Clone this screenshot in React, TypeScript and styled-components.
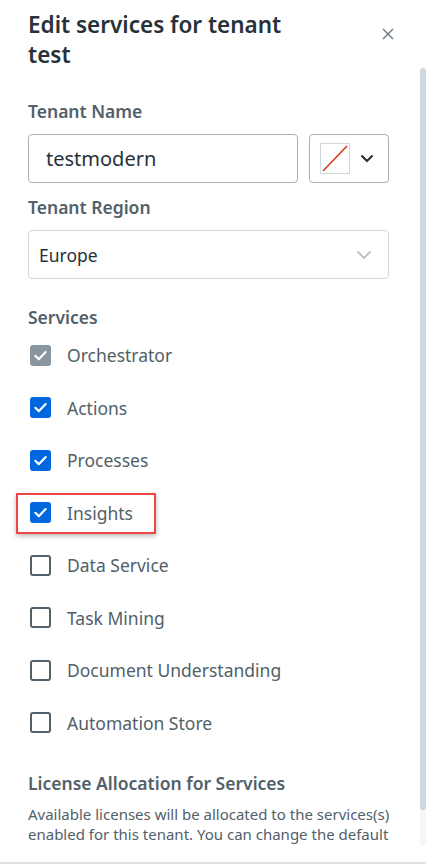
import styled, { createGlobalStyle } from "styled-components";

const GlobalStyle = createGlobalStyle`
  html, body {
    margin: 0;
    padding: 0;
    background: #ffffff;
  }
  body {
    font-family: "Noto Sans", "Open Sans", sans-serif;
  }
  * {
    box-sizing: border-box;
  }
`;

const services = [
  { name: "Orchestrator", state: "disabled" },
  { name: "Actions", state: "checked" },
  { name: "Processes", state: "checked" },
  { name: "Insights", state: "checked", highlight: true },
  { name: "Data Service", state: "empty" },
  { name: "Task Mining", state: "empty" },
  { name: "Document Understanding", state: "empty" },
  { name: "Automation Store", state: "empty" },
];

type BoxState = "disabled" | "checked" | "empty";

const CheckMark = () => (
  <svg width="15" height="15" viewBox="0 0 14 14" fill="none">
    <path d="M2.2 7.3 L5.4 10.4 L11.8 3.8" stroke="#ffffff" strokeWidth="2" strokeLinecap="round" strokeLinejoin="round" />
  </svg>
);

const App = () => {
  return (
    <>
      <GlobalStyle />
      <Panel>
        <Header>
          <Title>Edit services for tenant test</Title>
          <CloseButton aria-label="close">
            <svg width="12" height="12" viewBox="0 0 12 12">
              <path d="M1 1 L11 11 M11 1 L1 11" stroke="#6b7780" strokeWidth="1.4" />
            </svg>
          </CloseButton>
        </Header>
        <BodyWrap>
          <Body>
            <Label>Tenant Name</Label>
            <NameRow>
              <TextInput>testmodern</TextInput>
              <ColorPicker>
                <Swatch>
                  <svg width="28" height="29" viewBox="0 0 28 29">
                    <line x1="2" y1="27" x2="26" y2="2" stroke="#d43a14" strokeWidth="1.6" />
                  </svg>
                </Swatch>
                <svg width="14" height="9" viewBox="0 0 14 9">
                  <path d="M1.5 1.5 L7 7 L12.5 1.5" stroke="#273139" strokeWidth="2.2" fill="none" />
                </svg>
              </ColorPicker>
            </NameRow>
            <Label>Tenant Region</Label>
            <Select>
              <span>Europe</span>
              <svg width="16" height="10" viewBox="0 0 16 10">
                <path d="M1.5 1.5 L8 8 L14.5 1.5" stroke="#b8c0c6" strokeWidth="1.8" fill="none" />
              </svg>
            </Select>
            <SectionLabel>Services</SectionLabel>
            <List>
              {services.map((s) => (
                <Row key={s.name}>
                  <Box $state={s.state as BoxState}>{s.state !== "empty" && <CheckMark />}</Box>
                  <RowText>{s.name}</RowText>
                  {s.highlight && <Highlight />}
                </Row>
              ))}
            </List>
            <LicenseTitle>License Allocation for Services</LicenseTitle>
            <Paragraph>
              Available licenses will be allocated to the services(s) enabled for this tenant. You can change the default
              configuration from the edit license allocation page.
            </Paragraph>
          </Body>
          <ScrollTrack>
            <ScrollThumb />
          </ScrollTrack>
        </BodyWrap>
        <Footer />
      </Panel>
    </>
  );
};

export default App;

const Panel = styled.div`
  width: 426px;
  height: 864px;
  display: flex;
  flex-direction: column;
  background: #ffffff;
  overflow: hidden;
`;

const Header = styled.div`
  height: 68px;
  flex: none;
  display: flex;
  align-items: flex-start;
  justify-content: space-between;
  padding: 10px 32px 0 28px;
`;

const Title = styled.h2`
  margin: 0;
  width: 280px;
  font-size: 22.5px;
  line-height: 30px;
  font-weight: 600;
  color: #273139;
`;

const CloseButton = styled.button`
  margin-top: 18px;
  padding: 0;
  border: none;
  background: none;
  width: 12px;
  height: 12px;
  display: flex;
`;

const BodyWrap = styled.div`
  height: 778px;
  flex: none;
  display: flex;
`;

const Body = styled.div`
  flex: 1;
  overflow: hidden;
  padding: 31px 31px 0 28px;
`;

const ScrollTrack = styled.div`
  width: 6px;
  height: 100%;
  background: #f4f6f8;
  border-radius: 3px;
`;

const ScrollThumb = styled.div`
  height: 742px;
  background: #cfd8dd;
  border-radius: 3px;
`;

const Label = styled.div`
  font-size: 17.5px;
  line-height: 24px;
  font-weight: 600;
  color: #526069;
  margin-bottom: 11px;
`;

const SectionLabel = styled(Label)`
  margin-top: 26px;
  margin-bottom: 0;
`;

const NameRow = styled.div`
  display: flex;
  gap: 11px;
  margin-bottom: 12px;
`;

const TextInput = styled.div`
  flex: 1;
  height: 49px;
  border: 1px solid #a4b1b8;
  border-radius: 4px;
  padding: 0 17px;
  display: flex;
  align-items: center;
  font-size: 20px;
  color: #273139;
`;

const ColorPicker = styled.div`
  width: 80px;
  height: 49px;
  border: 1px solid #a4b1b8;
  border-radius: 4px;
  display: flex;
  align-items: center;
  gap: 10px;
  padding-left: 10px;
`;

const Swatch = styled.div`
  width: 30px;
  height: 31px;
  border: 1px solid #cfd8dd;
  display: flex;
  align-items: center;
  justify-content: center;
`;

const Select = styled.div`
  height: 49px;
  border: 1px solid #cfd8dd;
  border-radius: 4px;
  padding: 0 16px 0 10px;
  display: flex;
  align-items: center;
  justify-content: space-between;
  font-size: 17.5px;
  color: #273139;
`;

const List = styled.div`
  display: grid;
  grid-auto-rows: 52.5px;
  margin-bottom: 22px;
`;

const Row = styled.div`
  position: relative;
  display: flex;
  align-items: center;
  gap: 16px;
  padding-left: 2px;
`;

const Box = styled.div<{ $state: BoxState }>`
  width: 21px;
  height: 21px;
  border-radius: 3px;
  display: flex;
  align-items: center;
  justify-content: center;
  background: ${(p) => (p.$state === "checked" ? "#0067df" : p.$state === "disabled" ? "#8a969f" : "#ffffff")};
  border: ${(p) => (p.$state === "empty" ? "2.5px solid #526069" : "none")};
`;

const RowText = styled.span`
  font-size: 17.5px;
  color: #526069;
`;

const Highlight = styled.div`
  position: absolute;
  left: -12px;
  top: 6px;
  width: 140px;
  height: 41px;
  border: 2.5px solid #ec4646;
  box-shadow: 0 2px 5px rgba(0, 0, 0, 0.28);
  pointer-events: none;
`;

const LicenseTitle = styled(Label)`
  margin-bottom: 9px;
`;

const Paragraph = styled.p`
  margin: 0 -3px 0 0;
  font-size: 15px;
  line-height: 20px;
  color: #526069;
`;

const Footer = styled.div`
  flex: 1;
  border-bottom: 2px solid #dfe3e6;
`;
